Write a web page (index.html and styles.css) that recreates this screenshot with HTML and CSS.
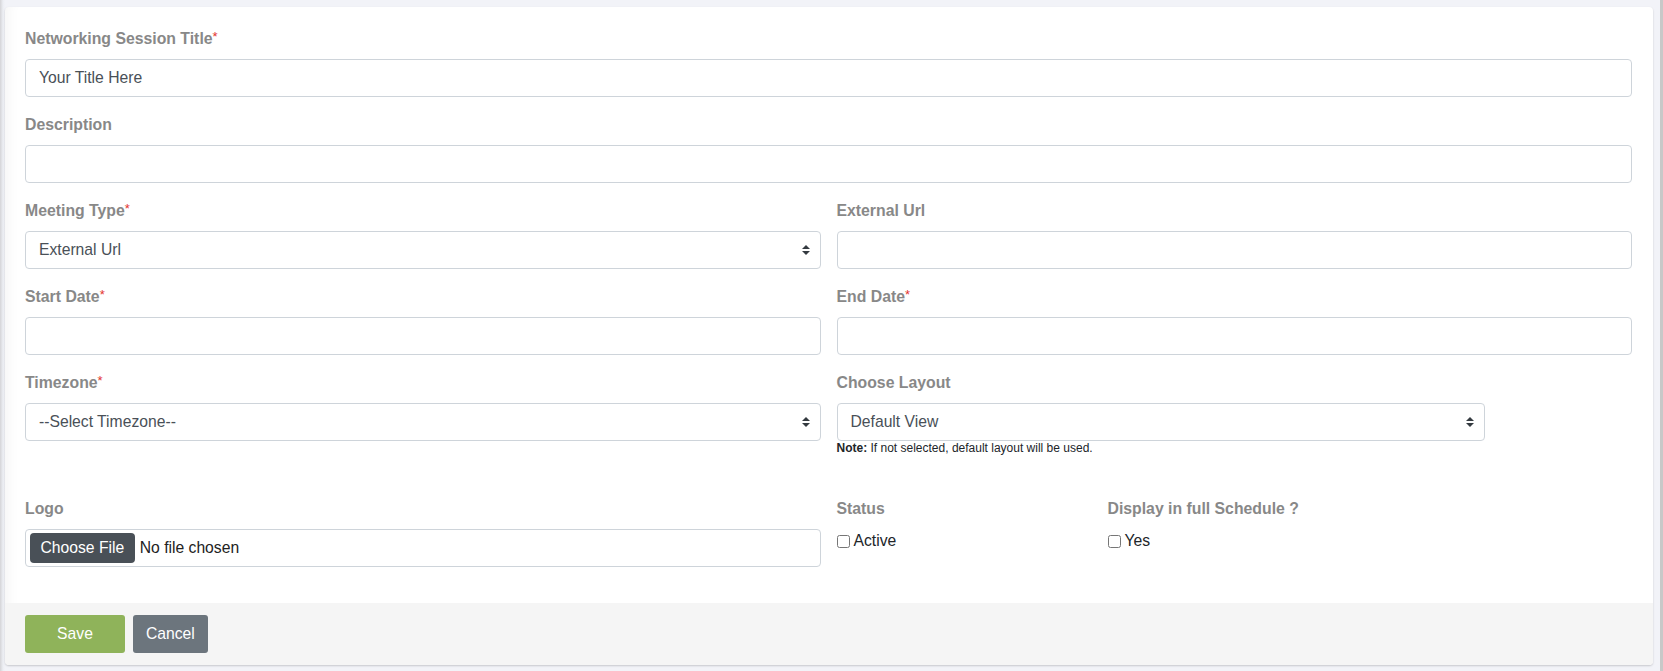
FILE: index.html
```html
<!DOCTYPE html>
<html lang="en">
<head>
<meta charset="utf-8">
<title>Networking Session</title>
<link rel="stylesheet" href="styles.css">
</head>
<body>
<div class="page">
  <form class="card">
    <div class="card-body">
      <div class="form-group">
        <label class="label">Networking Session Title<span class="req">*</span></label>
        <input class="control" type="text" value="Your Title Here">
      </div>
      <div class="form-group">
        <label class="label">Description</label>
        <input class="control" type="text" value="">
      </div>
      <div class="grid-2">
        <div class="form-group">
          <label class="label">Meeting Type<span class="req">*</span></label>
          <div class="select-wrap">
            <select class="control select"><option>External Url</option></select>
            <svg class="caret" viewBox="0 0 4 5" width="8" height="10"><path d="M2 0L0 2h4zm0 5L0 3h4z"/></svg>
          </div>
        </div>
        <div class="form-group">
          <label class="label">External Url</label>
          <input class="control" type="text" value="">
        </div>
        <div class="form-group">
          <label class="label">Start Date<span class="req">*</span></label>
          <input class="control" type="text" value="">
        </div>
        <div class="form-group">
          <label class="label">End Date<span class="req">*</span></label>
          <input class="control" type="text" value="">
        </div>
        <div class="form-group">
          <label class="label">Timezone<span class="req">*</span></label>
          <div class="select-wrap">
            <select class="control select"><option>--Select Timezone--</option></select>
            <svg class="caret" viewBox="0 0 4 5" width="8" height="10"><path d="M2 0L0 2h4zm0 5L0 3h4z"/></svg>
          </div>
        </div>
        <div class="form-group layout-group">
          <label class="label">Choose Layout</label>
          <div class="select-wrap layout-select">
            <select class="control select"><option>Default View</option></select>
            <svg class="caret" viewBox="0 0 4 5" width="8" height="10"><path d="M2 0L0 2h4zm0 5L0 3h4z"/></svg>
          </div>
          <p class="note"><b>Note:</b> If not selected, default layout will be used.</p>
        </div>
        <div class="form-group last">
          <label class="label">Logo</label>
          <div class="control file">
            <span class="file-btn">Choose File</span>
            <span class="file-name">No file chosen</span>
          </div>
        </div>
        <div class="sub-grid">
          <div class="form-group last">
            <label class="label">Status</label>
            <label class="check"><input type="checkbox">Active</label>
          </div>
          <div class="form-group last">
            <label class="label">Display in full Schedule ?</label>
            <label class="check"><input type="checkbox">Yes</label>
          </div>
        </div>
      </div>
    </div>
    <div class="card-footer">
      <button type="button" class="btn btn-save">Save</button>
      <button type="button" class="btn btn-cancel">Cancel</button>
    </div>
  </form>
</div>
</body>
</html>
```
FILE: styles.css
```css
* { box-sizing: border-box; }

html, body {
  margin: 0;
  height: 100%;
}

body {
  font-family: "Liberation Sans", Arial, sans-serif;
  font-size: 15.7px;
  color: #212529;
  background:
    linear-gradient(to right, #d4d4d7 0, #eceef3 3px, #f2f3f8 5px, #f2f3f8 calc(100% - 3px), #c8c8c8 calc(100% - 3px));
}

.page {
  padding: 7px 10px 6px 5px;
}

.card {
  background: #fff;
  border-radius: 4px;
  box-shadow: 0 1px 2px rgba(0, 0, 0, 0.18), inset 14px 0 14px -12px rgba(0, 0, 0, 0.05);
  overflow: hidden;
}

.card-body {
  padding: 20px 21px 36px 20px;
}

.form-group {
  margin-bottom: 16px;
}

.form-group.last {
  margin-bottom: 0;
}

.label {
  display: block;
  font-weight: bold;
  font-size: 15.8px;
  line-height: 24px;
  color: #888888;
  margin-bottom: 8px;
}

.req {
  color: #e3342f;
  font-size: 13px;
  vertical-align: top;
  line-height: 20px;
  font-weight: normal;
}

.control {
  display: block;
  width: 100%;
  height: 38px;
  padding: 0 13px;
  font-family: "Liberation Sans", Arial, sans-serif;
  font-size: 15.7px;
  line-height: 23.5px;
  color: #495057;
  background: #fff;
  border: 1px solid #ced4da;
  border-radius: 4px;
  outline: none;
}

.grid-2 {
  display: grid;
  grid-template-columns: 1fr 1fr;
  column-gap: 16px;
}

.select-wrap {
  position: relative;
}

.select {
  appearance: none;
  -webkit-appearance: none;
  padding-right: 30px;
}

.caret {
  position: absolute;
  right: 11px;
  top: 14px;
  fill: #343a40;
  pointer-events: none;
}

.layout-select {
  width: 648px;
}

.layout-group {
  padding-bottom: 26px;
}

.note {
  margin: 0;
  font-size: 12px;
  line-height: 14px;
  color: #212529;
}

.file {
  display: flex;
  align-items: center;
  padding: 0 4px;
}

.file-btn {
  display: inline-block;
  height: 30px;
  line-height: 30px;
  padding: 0 10.5px;
  background: #495057;
  color: #fff;
  border-radius: 4px;
  font-size: 15.7px;
}

.file-name {
  margin-left: 5px;
  color: #222;
}

.sub-grid {
  display: grid;
  grid-template-columns: 271px 1fr;
}

.check {
  display: flex;
  align-items: center;
  height: 24px;
  font-size: 15.7px;
  color: #212529;
}

.check input {
  width: 13px;
  height: 13px;
  margin: 0 4px 0 0;
}

.card-footer {
  background: #f5f5f5;
  padding: 12px 20px;
  display: flex;
  gap: 8px;
}

.btn {
  height: 38px;
  border: 0;
  border-radius: 3px;
  color: #fff;
  font-family: "Liberation Sans", Arial, sans-serif;
  font-size: 15.7px;
  padding: 0 13px;
  cursor: pointer;
}

.btn-save {
  width: 100px;
  background: #8fb35a;
}

.btn-cancel {
  background: #6c757d;
}
```
